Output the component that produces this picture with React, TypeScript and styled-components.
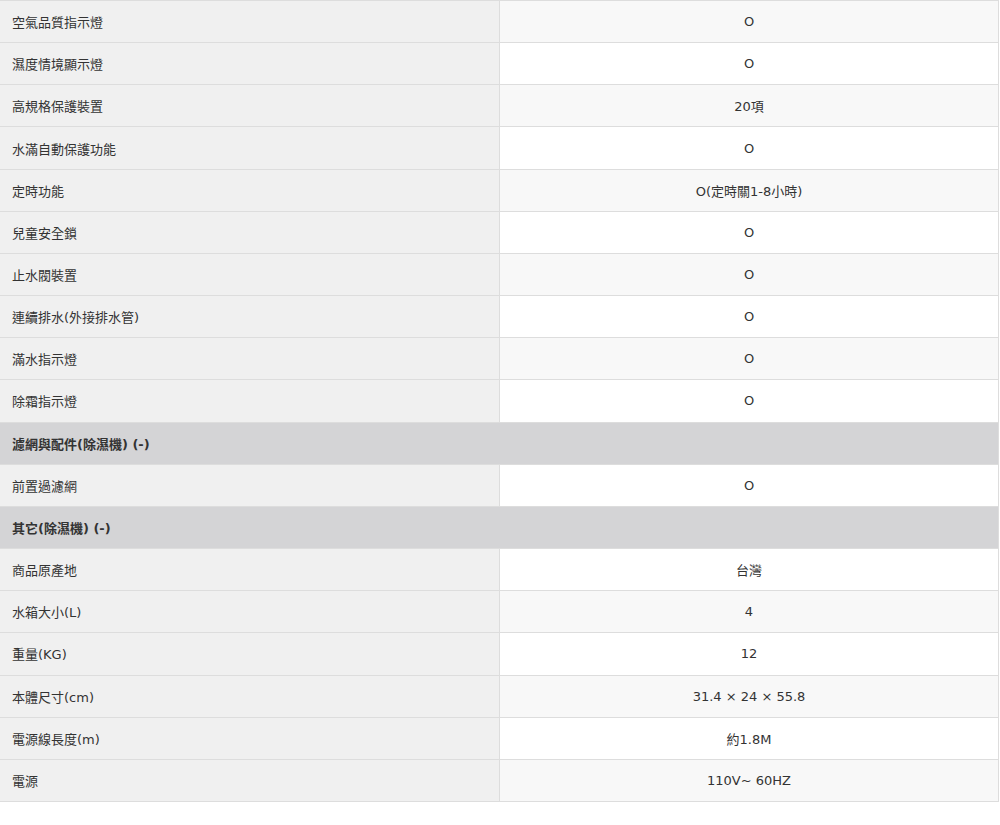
import React from "react";
import styled, { createGlobalStyle } from "styled-components";

const Global = createGlobalStyle`
  html, body { margin: 0; padding: 0; background: #ffffff; }
  body { font-family: "DejaVu Sans", "Noto Sans CJK TC", sans-serif; }
`;

const Table = styled.div`
  width: 999px;
  display: flex;
  flex-direction: column;
  border-top: 1px solid #dddddd;
  border-right: 1px solid #dddddd;
  box-sizing: border-box;
`;

const Row = styled.div<{ $shade: boolean }>`
  display: grid;
  grid-template-columns: 500px 1fr;
  height: 42.16px;
  box-sizing: border-box;
  border-bottom: 1px solid #dddddd;
  background: ${(p) => (p.$shade ? "#f8f8f8" : "#ffffff")};
`;

const Label = styled.div`
  display: flex;
  align-items: center;
  padding-left: 12px;
  background: #f0f0f0;
  border-right: 1px solid #dddddd;
  font-size: 13px;
  color: #333333;
`;

const Value = styled.div`
  display: flex;
  align-items: center;
  justify-content: center;
  font-size: 13px;
  color: #333333;
`;

const Section = styled.div`
  height: 42.16px;
  box-sizing: border-box;
  border-bottom: 1px solid #dddddd;
  background: #d4d4d6;
  display: flex;
  align-items: center;
  padding-left: 12px;
  font-size: 13px;
  font-weight: 700;
  color: #333333;
`;

type Item = { label: string; value?: string; section?: boolean };

const items: Item[] = [
  { label: "空氣品質指示燈", value: "O" },
  { label: "濕度情境顯示燈", value: "O" },
  { label: "高規格保護裝置", value: "20項" },
  { label: "水滿自動保護功能", value: "O" },
  { label: "定時功能", value: "O(定時關1-8小時)" },
  { label: "兒童安全鎖", value: "O" },
  { label: "止水閥裝置", value: "O" },
  { label: "連續排水(外接排水管)", value: "O" },
  { label: "滿水指示燈", value: "O" },
  { label: "除霜指示燈", value: "O" },
  { label: "濾網與配件(除濕機) (-)", section: true },
  { label: "前置過濾網", value: "O" },
  { label: "其它(除濕機) (-)", section: true },
  { label: "商品原產地", value: "台灣" },
  { label: "水箱大小(L)", value: "4" },
  { label: "重量(KG)", value: "12" },
  { label: "本體尺寸(cm)", value: "31.4 × 24 × 55.8" },
  { label: "電源線長度(m)", value: "約1.8M" },
  { label: "電源", value: "110V~ 60HZ" },
];

export default function App() {
  return (
    <>
      <Global />
      <Table>
        {items.map((it, i) =>
          it.section ? (
            <Section key={i}>{it.label}</Section>
          ) : (
            <Row key={i} $shade={i % 2 === 0}>
              <Label>{it.label}</Label>
              <Value>{it.value}</Value>
            </Row>
          )
        )}
      </Table>
    </>
  );
}
